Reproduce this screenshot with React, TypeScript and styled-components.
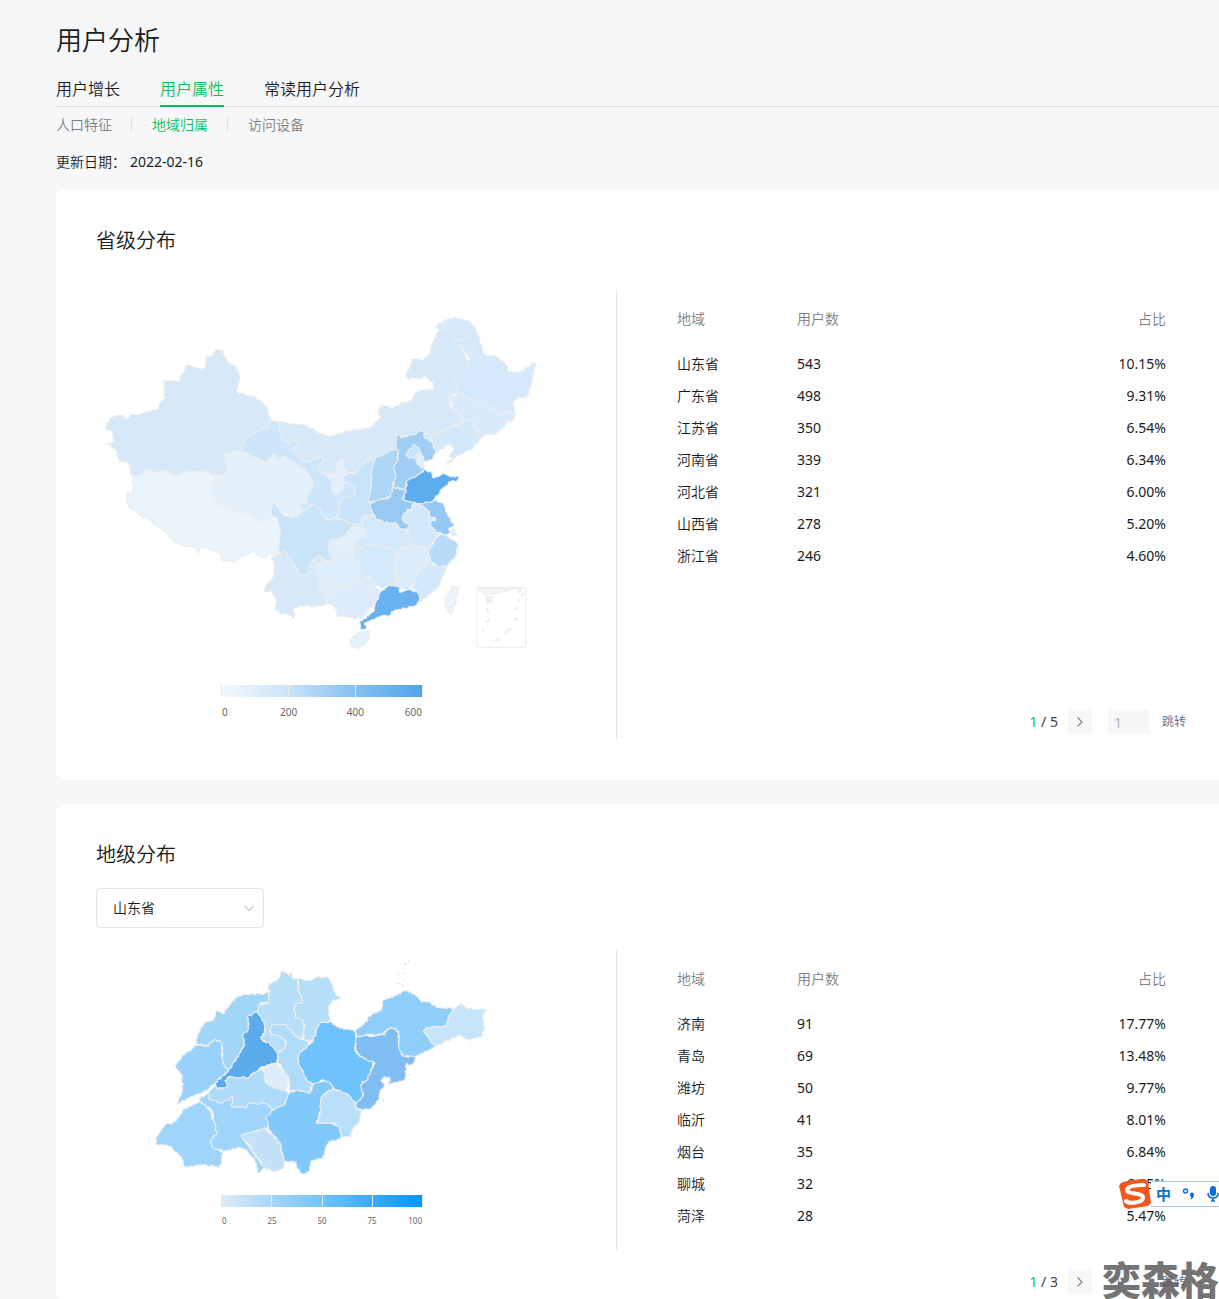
import React from "react";
import styled, { createGlobalStyle, css } from "styled-components";

const GlobalStyle = createGlobalStyle`
  * { box-sizing: border-box; }
  body {
    margin: 0;
    background: #f6f7f9;
    color: #1a1b1c;
    font-family: "Noto Sans", "Noto Sans CJK SC", sans-serif;
    font-size: 14px;
    font-weight: 350;
    line-height: 20px;
  }
  button, input, select { font: inherit; color: inherit; }
`;

const Page = styled.main`
  position: relative;
  min-height: 100vh;
  display: flex;
  flex-direction: column;
  padding: 22px 0 0 56px;
  overflow: hidden;
`;

const PageTitle = styled.h1`
  margin: 0;
  font-size: 26px;
  font-weight: 350;
  line-height: 36px;
`;

const Tabs = styled.nav`
  display: flex;
  gap: 40px;
  height: 49px;
  padding-top: 14px;
  border-bottom: 1px solid #dfe1e4;
`;

const Tab = styled.a<{ $active?: boolean }>`
  height: 35px;
  padding-top: 5px;
  font-size: 16px;
  line-height: 24px;
  text-decoration: none;
  color: ${(p) => (p.$active ? "#07c160" : "#1a1b1c")};
  border-bottom: 2px solid ${(p) => (p.$active ? "#07c160" : "transparent")};
`;

const SubTabs = styled.nav`
  display: flex;
  align-items: center;
  height: 36px;
`;

const SubTab = styled.a<{ $active?: boolean }>`
  display: flex;
  align-items: center;
  text-decoration: none;
  color: ${(p) => (p.$active ? "#07c160" : "#7e8083")};
  &:not(:first-child)::before {
    content: "";
    width: 1px;
    height: 14px;
    margin: 0 20px 0 19px;
    background: #dcdee1;
  }
`;

const UpdateLine = styled.p`
  display: flex;
  gap: 4px;
  margin: 0;
  padding: 9px 0 18px;
`;

const DateText = styled.time`
  font-size: 14px;
  font-weight: 400;
`;

const Card = styled.section<{ $last?: boolean }>`
  background: #fff;
  border-radius: 8px 0 0 8px;
  padding: 35px 33px 40px 40px;
  ${(p) =>
    p.$last
      ? css`
          flex: 1;
          margin-top: 24px;
          padding-bottom: 5px;
        `
      : null}
`;

const CardTitle = styled.h2`
  margin: 0;
  font-size: 20px;
  font-weight: 350;
  line-height: 32px;
`;

const CardBody = styled.div<{ $gap: number }>`
  display: flex;
  align-items: flex-start;
  margin-top: ${(p) => p.$gap}px;
`;

const MapPanel = styled.div<{ $height: number }>`
  flex: 0 0 521px;
  height: ${(p) => p.$height}px;
  padding-right: 68px;
  border-right: 1px solid #e4e6e9;
  display: flex;
  flex-direction: column;
  align-items: center;
  gap: 10px;
`;

const MapDrawing = styled.svg`
  display: block;
  align-self: flex-start;
  width: 450px;
  flex: none;
`;

const Legend = styled.div`
  width: 202px;
`;

const LegendBar = styled.div<{ $colors: string }>`
  display: flex;
  height: 12px;
  border-left: 1px solid #e6e6e6;
  background: linear-gradient(to right, ${(p) => p.$colors});
`;

const LegendStep = styled.span`
  flex: 1;
  border-right: 1px solid #e6e6e6;
`;

const LegendLabels = styled.div<{ $small?: boolean }>`
  display: flex;
  margin-top: ${(p) => (p.$small ? 8 : 9)}px;
  font-weight: 400;
  font-size: ${(p) => (p.$small ? 8 : 10)}px;
  line-height: 12px;
  color: #666;
`;

const LegendLabel = styled.span`
  flex: 2;
  text-align: center;
  &:first-child { flex: 1; text-align: left; padding-left: 1px; }
  &:last-child { flex: 1; text-align: right; padding-right: 1px; }
`;

const DataPanel = styled.div`
  flex: 1;
  min-width: 0;
  padding-left: 40px;
`;

const TableArea = styled.div<{ $height: number }>`
  min-height: ${(p) => p.$height}px;
`;

const Table = styled.table`
  width: 100%;
  border-collapse: collapse;
  table-layout: fixed;
`;

const HeadCell = styled.th<{ $width?: number; $right?: boolean }>`
  width: ${(p) => (p.$width ? `${p.$width}px` : "auto")};
  height: 58px;
  padding: 0 20px;
  font-weight: 350;
  color: #7e8083;
  text-align: ${(p) => (p.$right ? "right" : "left")};
`;

const Cell = styled.td<{ $right?: boolean; $numeric?: boolean }>`
  height: 32px;
  padding: 0 20px;
  font-weight: ${(p) => (p.$numeric ? 400 : 350)};
  text-align: ${(p) => (p.$right ? "right" : "left")};
`;

const Pager = styled.form`
  display: flex;
  align-items: center;
  justify-content: flex-end;
  height: 24px;
`;

const PageCount = styled.span`
  margin-right: 10px;
  font-weight: 400;
  color: #3f4144;
`;

const CurrentPage = styled.span`
  color: #07c160;
`;

const NextButton = styled.button`
  display: grid;
  place-items: center;
  width: 24px;
  height: 24px;
  margin-right: 16px;
  padding: 0;
  border: 0;
  border-radius: 2px;
  background: #f6f7f9;
`;

const PageInput = styled.input`
  width: 42px;
  height: 24px;
  margin-right: 12px;
  padding: 0 6px;
  border: 0;
  border-radius: 2px;
  background: #f6f7f9;
  font-weight: 400;
  &::placeholder { color: #b2b4b7; opacity: 1; }
`;

const JumpButton = styled.button`
  padding: 0;
  border: 0;
  background: none;
  font-size: 12px;
  color: #576b95;
`;

const SelectBox = styled.label`
  display: flex;
  align-items: center;
  width: 168px;
  height: 40px;
  margin-top: 17px;
  padding-right: 8px;
  border: 1px solid #e4e6e9;
  border-radius: 4px;
`;

const Select = styled.select`
  flex: 1;
  min-width: 0;
  height: 38px;
  padding: 0 16px;
  border: 0;
  background: none;
  appearance: none;
`;

const InputMethod = styled.aside`
  position: absolute;
  right: 0;
  top: 1178px;
  display: flex;
  align-items: center;
`;

const InputMethodBar = styled.div`
  display: flex;
  align-items: center;
  gap: 11px;
  height: 26px;
  padding-left: 5px;
  border: solid #a8c8ea;
  border-width: 1px 0;
  background: #fff;
  color: #0a6fd6;
  font-size: 15px;
  font-weight: 700;
`;

const Watermark = styled.div`
  position: absolute;
  right: 0;
  top: 1258px;
  font-family: "Noto Sans CJK SC", sans-serif;
  font-size: 39px;
  font-weight: 900;
  line-height: 40px;
  color: rgba(85, 85, 85, 0.82);
  pointer-events: none;
`;

/* ---------- map data ---------- */

type Region = { name: string; fill: string; points: string; dx?: number; dy?: number };

const noise = (a: number, b: number, c: number) => {
  const s = Math.sin(a * 12.9898 + b * 78.233 + c * 37.719) * 43758.5453;
  return s - Math.floor(s) - 0.5;
};

// Splits each edge into short wavering pieces; an edge gives the same pieces from either side.
const borderPath = ({ points, dx = 0, dy = 0 }: Region) => {
  const n = points.trim().split(/\s+/).map(Number);
  const pts: number[][] = [];
  for (let i = 0; i < n.length; i += 2) pts.push([n[i] + dx, n[i + 1] + dy]);
  const out: string[] = [];
  pts.forEach((p, i) => {
    const q = pts[(i + 1) % pts.length];
    const swap = p[0] > q[0] || (p[0] === q[0] && p[1] > q[1]);
    const [a, b] = swap ? [q, p] : [p, q];
    const len = Math.hypot(b[0] - a[0], b[1] - a[1]);
    const steps = Math.max(1, Math.round(len / 6));
    const edge: string[] = [];
    for (let k = 1; k < steps; k++) {
      const t = k / steps;
      const w = noise(a[0] + b[0], a[1] + b[1], k) * 6;
      const x = a[0] + (b[0] - a[0]) * t - ((b[1] - a[1]) / len) * w;
      const y = a[1] + (b[1] - a[1]) * t + ((b[0] - a[0]) / len) * w;
      edge.push(`${x.toFixed(1)} ${y.toFixed(1)}`);
    }
    if (swap) edge.reverse();
    out.push(`${p[0]} ${p[1]}`, ...edge);
  });
  return `M${out.join("L")}Z`;
};

const E = { dx: 690, dy: 0 };
const SE = { dx: 690, dy: 480 };
const SW = { dx: 0, dy: 480 };

const CHINA: Region[] = [
  { name: "interior", fill: "#d7e9f9", points: "20 50 300 50 320 140 340 300 280 380 60 375 20 400 -30 390 -60 300 -30 200", ...SE },
  { name: "内蒙古", fill: "#d7e9f9", points: "565 364 600 372 640 374 665 385 690 400 725 410 760 395 810 388 838 385 873 352 865 335 875 316 910 324 940 308 965 302 975 280 1000 270 1035 266 1025 245 1005 228 985 238 965 232 955 238 948 228 970 175 1000 182 1020 160 1023 135 1047 90 1035 82 1060 65 1060 85 1080 92 1102 122 1125 165 1138 185 1127 212 1090 243 1103 265 1100 280 1075 290 1085 330 1105 335 1120 362 1090 378 1060 388 1042 412 1035 395 1028 420 1010 440 920 450 895 455 855 478 830 483 805 515 795 523 765 510 742 490 735 520 705 522 690 515 685 500 700 485 697 470 668 478 645 486 625 465 605 448 622 435 618 422 583 426 570 400" },
  { name: "西藏", fill: "#e9f4fd", points: "130 528 152 526 170 508 202 518 218 510 240 520 262 525 300 513 340 512 370 522 378 530 372 560 370 585 390 615 430 630 480 640 500 663 530 663 548 645 565 670 569 705 568 745 560 765 545 762 520 772 488 756 450 773 430 785 398 782 390 760 350 742 335 745 325 760 318 740 290 740 258 728 240 715 220 690 208 686 170 650 158 655 145 640 118 620 110 602 110 575 122 582 130 560 125 545" },
  { name: "新疆", fill: "#d7e9f9", points: "50 368 58 365 62 353 84 347 100 345 102 353 116 355 128 341 146 344 175 334 205 326 210 308 224 297 223 250 218 243 255 241 268 246 271 232 292 194 310 203 332 207 345 203 348 172 370 167 378 151 398 151 400 168 415 188 438 198 449 235 440 265 443 278 492 290 530 318 537 345 547 362 538 368 538 385 510 390 488 405 465 418 450 453 400 463 412 498 405 528 370 522 340 512 300 513 262 525 240 520 218 510 202 518 170 508 152 526 130 528 120 518 118 492 85 478 80 452 62 436 52 432 68 428 68 395 50 388" },
  { name: "甘肃", fill: "#cee6fb", points: "547 362 565 364 570 400 583 426 618 422 622 435 605 448 625 465 645 486 668 478 697 470 700 485 685 500 690 515 710 525 725 540 732 580 745 583 760 545 795 558 797 588 752 595 748 620 750 640 735 655 720 660 700 652 692 628 670 625 662 612 650 630 640 628 622 608 650 610 650 590 668 565 668 545 645 510 615 490 585 470 570 475 548 463 530 488 490 472 465 458 450 453 465 418 488 405 510 390 538 385 538 368" },
  { name: "四川", fill: "#c9e3f9", points: "543 165 545 130 555 125 580 165 610 172 645 150 665 132 692 148 700 172 725 182 735 175 760 180 790 195 785 215 765 230 720 240 715 260 730 285 732 300 708 302 690 288 668 305 655 340 630 347 605 300 580 270 568 280 570 200 562 175", ...SW },
  { name: "青海", fill: "#e5f1fa", points: "400 463 450 453 465 458 490 472 530 488 548 463 570 475 585 470 615 490 645 510 668 545 668 565 650 590 650 610 622 608 640 628 625 645 600 652 575 635 565 612 550 605 543 620 545 640 530 663 500 663 480 640 430 630 390 615 370 585 370 560 378 530 405 528 412 498" },
  { name: "云南", fill: "#d7e9f9", points: "545 290 568 280 580 270 605 300 630 347 655 340 668 305 685 285 700 300 715 310 675 320 690 345 690 385 712 400 720 428 690 437 668 442 635 437 612 445 613 475 600 465 575 462 555 445 560 420 545 392 520 395 530 372 550 350 553 320", ...SW },
  { name: "黑龙江", fill: "#d5e9fa", points: "370 65 405 52 450 65 465 85 495 165 530 170 555 190 568 215 595 217 640 190 647 188 640 215 632 260 620 292 597 290 580 305 587 345 568 335 540 345 525 322 510 328 495 305 445 297 430 290 428 277 412 275 410 260 398 243 437 212 450 180 437 160 412 123 390 95 370 85", ...E },
  { name: "吉林", fill: "#d9ebfb", points: "385 290 395 285 412 290 412 275 428 277 430 290 445 297 495 305 510 328 525 322 540 345 568 335 587 345 575 368 560 362 555 380 525 405 495 402 475 427 465 385 455 365 430 360 410 330 397 333 393 300", ...E },
  { name: "辽宁", fill: "#d3e8f9", points: "430 360 455 365 465 385 475 427 450 450 415 465 385 490 380 486 400 475 387 465 402 442 385 433 348 458 333 425 338 393 345 395 352 410 368 392 400 380 430 368", ...E },
  { name: "陕西", fill: "#c8e3fa", points: "75 520 105 523 120 500 140 480 165 475 155 510 155 550 148 608 162 648 130 648 125 668 100 672 75 660 45 655 60 640 58 595 105 588 105 565 82 545 65 540", ...E },
  { name: "宁夏", fill: "#e3f0fb", points: "15 522 45 520 50 495 60 475 72 478 75 510 82 520 65 540 70 565 55 583 38 578 35 545", ...E },
  { name: "山西", fill: "#aed6f6", points: "165 475 190 465 205 455 228 447 237 455 230 470 235 480 220 500 227 530 218 555 218 585 190 597 148 608 148 590 155 550 155 510", ...E },
  { name: "河北", fill: "#9fcdf4", points: "228 430 228 405 240 403 243 413 290 400 302 388 312 395 315 415 335 425 348 458 340 470 322 485 305 480 312 510 295 525 258 550 258 567 218 562 227 530 220 500 235 480 230 470 237 455 228 440", ...E },
  { name: "北京", fill: "#cae4f9", points: "260 460 275 445 282 432 298 445 303 460 290 465 285 475 262 470", ...E },
  { name: "天津", fill: "#e0effc", points: "290 465 303 460 312 475 308 490 312 503 300 500 290 485", ...E },
  { name: "河南", fill: "#98c9f3", points: "148 130 210 112 220 82 245 88 262 90 247 118 285 130 275 145 260 150 262 160 248 180 268 195 262 210 245 207 225 188 190 187 165 172 155 150", ...SE },
  { name: "江苏", fill: "#95c8f3", points: "290 128 335 125 345 118 370 132 385 170 405 198 385 207 390 218 375 226 345 212 330 195 332 180 348 180 342 172 330 172 325 152 308 145", ...SE },
  { name: "山东", fill: "#5dacee", points: "258 90 262 75 258 65 300 42 312 30 335 35 338 52 350 50 370 38 395 50 417 50 412 62 395 63 365 88 345 115 335 125 300 130 278 128 248 118", ...SE },
  { name: "湖北", fill: "#d4e9f9", points: "128 172 150 165 165 172 190 187 225 188 245 207 262 215 272 245 270 255 230 270 190 262 150 252 118 262 100 240 130 230 138 215 125 195", ...SE },
  { name: "安徽", fill: "#d3e8f9", points: "275 135 290 130 320 145 328 160 325 172 345 175 345 182 330 185 335 205 358 220 345 240 325 265 300 262 270 258 270 235 262 205 268 192 248 180 252 160 275 148", ...SE },
  { name: "重庆", fill: "#e1effc", points: "30 240 60 240 75 230 95 200 120 203 138 215 135 230 100 240 105 275 85 275 55 285 42 300 28 285 25 260", ...SE },
  { name: "贵州", fill: "#ddedfa", points: "-20 320 0 310 42 305 60 288 85 278 105 285 118 315 118 350 95 375 50 385 30 405 0 390 -3 350", ...SE },
  { name: "广西", fill: "#dcecfb", points: "10 410 30 405 50 385 75 378 100 375 125 360 155 352 165 365 160 380 180 390 178 415 150 445 125 475 85 472 50 465 45 440 25 430", ...SE },
  { name: "湖南", fill: "#d4e9fa", points: "118 262 150 252 185 260 222 268 230 290 220 310 228 370 205 378 185 385 160 360 150 352 125 345 118 310", ...SE },
  { name: "江西", fill: "#dbecfb", points: "230 272 270 258 325 262 330 275 330 300 300 320 280 370 272 392 235 385 228 370 230 350 220 320 230 295", ...SE },
  { name: "福建", fill: "#d3e9f9", points: "330 305 348 318 383 320 365 350 360 370 340 395 300 425 295 395 275 385 290 345 305 325", ...SE },
  { name: "浙江", fill: "#b8dbf9", points: "345 240 360 222 380 228 412 250 410 275 405 290 380 318 348 318 330 300 325 272", ...SE },
  { name: "上海", fill: "#dfeaf5", points: "390 215 402 205 410 225 395 228", ...SE },
  { name: "广东", fill: "#69b2f0", points: "165 432 183 395 205 378 240 380 238 397 275 390 295 400 298 422 290 437 255 445 215 455 215 465 180 470 150 482 134 490 142 510 125 510 118 488 160 455", ...SE },
  { name: "海南", fill: "#e6f1fb", points: "90 540 110 518 150 515 148 535 130 555 112 565 92 558", ...SE },
  { name: "台湾", fill: "#edf3fa", points: "375 420 400 378 415 378 412 405 400 450 392 462 375 435", ...SE },
];

const SHANDONG: Region[] = [
  { name: "德州", fill: "#a2d6f9", points: "165 283 180 240 195 215 222 210 228 180 250 192 292 137 375 130 385 118 388 155 358 162 352 185 322 200 327 235 308 258 315 285 295 320 265 360 250 345 243 275 222 268 205 288" },
  { name: "聊城", fill: "#98d1fb", points: "165 287 205 288 222 268 243 275 248 340 265 362 245 378 225 402 190 425 145 445 112 462 128 420 127 378 105 350 125 320" },
  { name: "滨州", fill: "#b8dff8", points: "388 155 388 100 410 92 428 62 448 78 458 60 455 82 473 85 475 125 487 140 485 160 465 165 465 200 490 210 492 235 485 268 460 250 440 235 415 250 437 275 432 295 412 310 390 280 362 270 375 245 372 215 352 185 358 162 385 158" },
  { name: "东营", fill: "#b7def8", points: "473 87 510 92 530 82 560 80 575 100 585 130 604 147 578 150 566 170 568 200 572 215 540 220 528 245 518 272 490 268 493 235 490 210 465 200 465 165 485 160 487 140 475 125" },
  { name: "淄博", fill: "#b0dbf9", points: "390 255 392 235 400 225 440 225 460 250 480 268 510 272 500 292 478 310 475 340 500 390 515 402 510 430 480 420 448 420 445 380 415 340 412 312 435 295 440 275 420 258" },
  { name: "济南", fill: "#5cabec", points: "322 200 352 185 372 215 375 248 362 262 368 272 390 280 410 305 412 338 365 350 325 383 270 380 255 392 262 410 232 418 226 398 265 365 295 320 315 285 308 258 327 235" },
  { name: "泰安", fill: "#b0dafa", points: "205 430 225 402 232 418 262 410 255 392 270 380 325 383 365 352 380 400 440 422 448 428 432 465 400 480 380 462 325 460 318 475 275 470 278 440 245 460 205 445" },
  { name: "莱芜", fill: "#dcecf8", points: "368 355 412 338 420 355 445 382 440 422 400 412 380 400" },
  { name: "济宁", fill: "#9fd5fb", points: "180 440 205 432 205 445 245 460 278 440 275 470 318 475 325 460 380 462 400 480 382 500 385 535 375 533 305 557 330 595 355 630 375 652 355 670 345 635 320 600 300 592 250 605 215 590 212 575 230 548 215 480 180 455" },
  { name: "菏泽", fill: "#a0d5fb", points: "180 455 210 480 222 515 230 548 212 575 215 592 248 607 245 635 240 650 185 645 135 652 125 620 100 600 90 588 48 585 50 560 75 525 108 515 130 478 155 465" },
  { name: "临沂", fill: "#82c9fb", points: "400 480 432 465 448 430 475 420 510 430 520 402 552 390 575 405 580 420 560 425 545 440 545 465 535 500 530 520 575 520 600 530 605 560 600 568 565 575 555 600 550 625 512 635 508 665 485 675 470 650 468 635 432 635 420 578 385 535 380 500" },
  { name: "枣庄", fill: "#c3e2fa", points: "303 557 375 533 420 578 432 630 430 655 400 665 372 650 355 625 330 590" },
  { name: "潍坊", fill: "#6fc3fc", points: "570 215 600 235 640 240 648 262 645 300 660 320 700 335 692 365 680 392 665 395 668 435 655 462 640 455 625 435 600 425 580 415 575 405 552 390 515 402 500 390 475 340 478 310 500 292 520 272 528 245 540 220" },
  { name: "日照", fill: "#b9dffa", points: "545 440 575 418 605 425 630 440 645 460 650 480 665 482 655 520 635 540 632 560 605 560 600 530 575 518 530 520 540 490" },
  { name: "烟台", fill: "#90cefa", points: "645 240 680 215 685 200 725 180 730 150 770 135 790 122 812 125 845 155 870 155 890 172 940 175 925 200 920 228 890 232 860 235 850 245 870 268 890 285 850 310 828 320 790 318 775 300 775 250 768 235 740 238 728 252 650 258" },
  { name: "青岛", fill: "#80bdf3", points: "650 260 735 255 740 238 768 235 775 255 778 300 788 318 828 322 815 345 800 340 795 390 745 405 750 385 735 380 722 390 735 405 720 425 715 450 695 475 650 480 648 462 670 435 662 405 680 392 692 365 705 340 672 325 645 300" },
  { name: "威海", fill: "#c7e5fa", points: "942 178 965 160 980 175 1040 178 1027 195 1033 235 1022 262 980 268 958 255 915 275 885 290 870 268 850 245 860 232 920 228 925 200" },
];

const Regions = ({ items }: { items: Region[] }) => (
  <g stroke="#ebedef" strokeWidth="3.4" strokeLinejoin="round">
    {items.map((r) => (
      <path key={r.name} d={borderPath(r)} fill={r.fill} />
    ))}
  </g>
);

const ChinaMap = () => (
  <MapDrawing viewBox="18 -30 1350 1155" height={385} role="img" aria-label="省级分布">
    <Regions items={CHINA} />
    <path d="M1102 122l28-4 7-10 15 22-12 35" fill="none" stroke="#ebedef" strokeWidth="3.4" />
    <g transform="translate(690 480)" fill="#f3f3f3" stroke="#ededed" strokeWidth="3">
      <rect x="472" y="382" width="145" height="180" fill="#fff" />
      <path d="M474 384h120l-20 4-40 12-40 5-20-15zM592 384l7 14 8-14z" />
      <path d="M498 418l5-7h12l-4 14-10 3zM500 445l6 14M499 487l12-10M487 507l7 11M525 543l14-5M557 520l14-15M583 482l9-9M589 438v12M593 426l6-8M604 408l8-9" strokeWidth="6" />
      <path d="M274 489h3M295 498l4 3M362 422h2M412 461h2M413 240l8 6" />
    </g>
  </MapDrawing>
);

const ShandongMap = () => (
  <MapDrawing viewBox="-132 0 1350 705" height={235} role="img" aria-label="地级分布">
    <Regions items={SHANDONG} />
    <path
      d="M807 31v7M795 45l4-6M787 67l4 4M775 72v4M773 99l6 4M783 101l6 8M788 90h3M813 89h2M729 446v9M804 374h3M990 283h3"
      stroke="#c3d3e4"
      strokeWidth="3"
      fill="none"
    />
  </MapDrawing>
);

/* ---------- shared parts ---------- */

const Scale = ({ labels, colors, small }: { labels: number[]; colors: string; small?: boolean }) => (
  <Legend>
    <LegendBar $colors={colors}>
      {labels.slice(1).map((l) => (
        <LegendStep key={l} />
      ))}
    </LegendBar>
    <LegendLabels $small={small}>
      {labels.map((l) => (
        <LegendLabel key={l}>{l}</LegendLabel>
      ))}
    </LegendLabels>
  </Legend>
);

type Row = [string, number, string];

const PROVINCES: Row[] = [
  ["山东省", 543, "10.15%"],
  ["广东省", 498, "9.31%"],
  ["江苏省", 350, "6.54%"],
  ["河南省", 339, "6.34%"],
  ["河北省", 321, "6.00%"],
  ["山西省", 278, "5.20%"],
  ["浙江省", 246, "4.60%"],
];

const CITIES: Row[] = [
  ["济南", 91, "17.77%"],
  ["青岛", 69, "13.48%"],
  ["潍坊", 50, "9.77%"],
  ["临沂", 41, "8.01%"],
  ["烟台", 35, "6.84%"],
  ["聊城", 32, "6.25%"],
  ["菏泽", 28, "5.47%"],
];

const RegionData = ({ rows, pages, height }: { rows: Row[]; pages: number; height: number }) => (
  <DataPanel>
    <TableArea $height={height}>
      <Table>
        <thead>
          <tr>
            <HeadCell $width={120}>地域</HeadCell>
            <HeadCell>用户数</HeadCell>
            <HeadCell $right>占比</HeadCell>
          </tr>
        </thead>
        <tbody>
          {rows.map(([area, users, share]) => (
            <tr key={area}>
              <Cell>{area}</Cell>
              <Cell $numeric>{users}</Cell>
              <Cell $numeric $right>{share}</Cell>
            </tr>
          ))}
        </tbody>
      </Table>
    </TableArea>
    <Pager onSubmit={(e) => e.preventDefault()}>
      <PageCount>
        <CurrentPage>1</CurrentPage> / {pages}
      </PageCount>
      <NextButton type="button" aria-label="下一页">
        <svg width="8" height="12" viewBox="0 0 8 12" fill="none" stroke="#85878a" strokeWidth="1.2">
          <path d="M1.5 1.5L6 6l-4.500 4.500" />
        </svg>
      </NextButton>
      <PageInput placeholder="1" aria-label="页码" />
      <JumpButton type="submit">跳转</JumpButton>
    </Pager>
  </DataPanel>
);

export default function App() {
  return (
    <>
      <GlobalStyle />
      <Page>
        <PageTitle>用户分析</PageTitle>
        <Tabs>
          <Tab href="#growth">用户增长</Tab>
          <Tab href="#attributes" $active>用户属性</Tab>
          <Tab href="#regulars">常读用户分析</Tab>
        </Tabs>
        <SubTabs>
          <SubTab href="#people">人口特征</SubTab>
          <SubTab href="#region" $active>地域归属</SubTab>
          <SubTab href="#device">访问设备</SubTab>
        </SubTabs>
        <UpdateLine>
          <span>更新日期：</span>
          <DateText>2022-02-16</DateText>
        </UpdateLine>

        <Card>
          <CardTitle>省级分布</CardTitle>
          <CardBody $gap={33}>
            <MapPanel $height={450}>
              <ChinaMap />
              <Scale labels={[0, 200, 400, 600]} colors="#f2f9ff, #c9e4f9 33%, #83bef1 67%, #4ea5ec" />
            </MapPanel>
            <RegionData rows={PROVINCES} pages={5} height={420} />
          </CardBody>
        </Card>

        <Card $last>
          <CardTitle>地级分布</CardTitle>
          <SelectBox>
            <Select aria-label="省份" defaultValue="山东省">
              <option>山东省</option>
              <option>广东省</option>
              <option>江苏省</option>
            </Select>
            <svg width="12" height="8" viewBox="0 0 12 8" fill="none" stroke="#a5a7aa" strokeWidth="1">
              <path d="M1 1.500l5 5 5-5" />
            </svg>
          </SelectBox>
          <CardBody $gap={22}>
            <MapPanel $height={300}>
              <ShandongMap />
              <Scale small labels={[0, 25, 50, 75, 100]} colors="#dcecf6, #a6d6f8 25%, #70c2fb 50%, #38abfd 75%, #0096ff" />
            </MapPanel>
            <RegionData rows={CITIES} pages={3} height={320} />
          </CardBody>
        </Card>

        <InputMethod aria-label="输入法">
          <svg width="32" height="32" viewBox="0 0 32 32">
            <path d="M4 4Q15 1 26 1l3 2 3 22-3 3-20 3-4-2L0 8Q1 5 4 4z" fill="#f4571f" />
            <path d="M25 7Q9 7 8 12c0 5 17 2 16 8-1 5-14 6-17 3" fill="none" stroke="#fff" strokeWidth="4" strokeLinecap="round" />
          </svg>
          <InputMethodBar>
            <span>中</span>
            <svg width="14" height="12" viewBox="0 0 14 12">
              <circle cx="3.500" cy="3" r="2" fill="none" stroke="#0a6fd6" strokeWidth="1.500" />
              <path d="M8 6.500a2 2 0 0 1 4 0c0 2-1 4-3 5l-.5-1 1-1.500A2 2 0 0 1 8 6.500z" fill="#0a6fd6" />
            </svg>
            <svg width="12" height="16" viewBox="0 0 12 16">
              <rect x="3" y="0" width="6" height="10" rx="3" fill="#0a6fd6" />
              <path d="M1 7q0 5 5 5t5-5M6 12v3M4 15h4" fill="none" stroke="#0a6fd6" strokeWidth="1.600" />
            </svg>
          </InputMethodBar>
        </InputMethod>
        <Watermark>奕森格</Watermark>
      </Page>
    </>
  );
}
